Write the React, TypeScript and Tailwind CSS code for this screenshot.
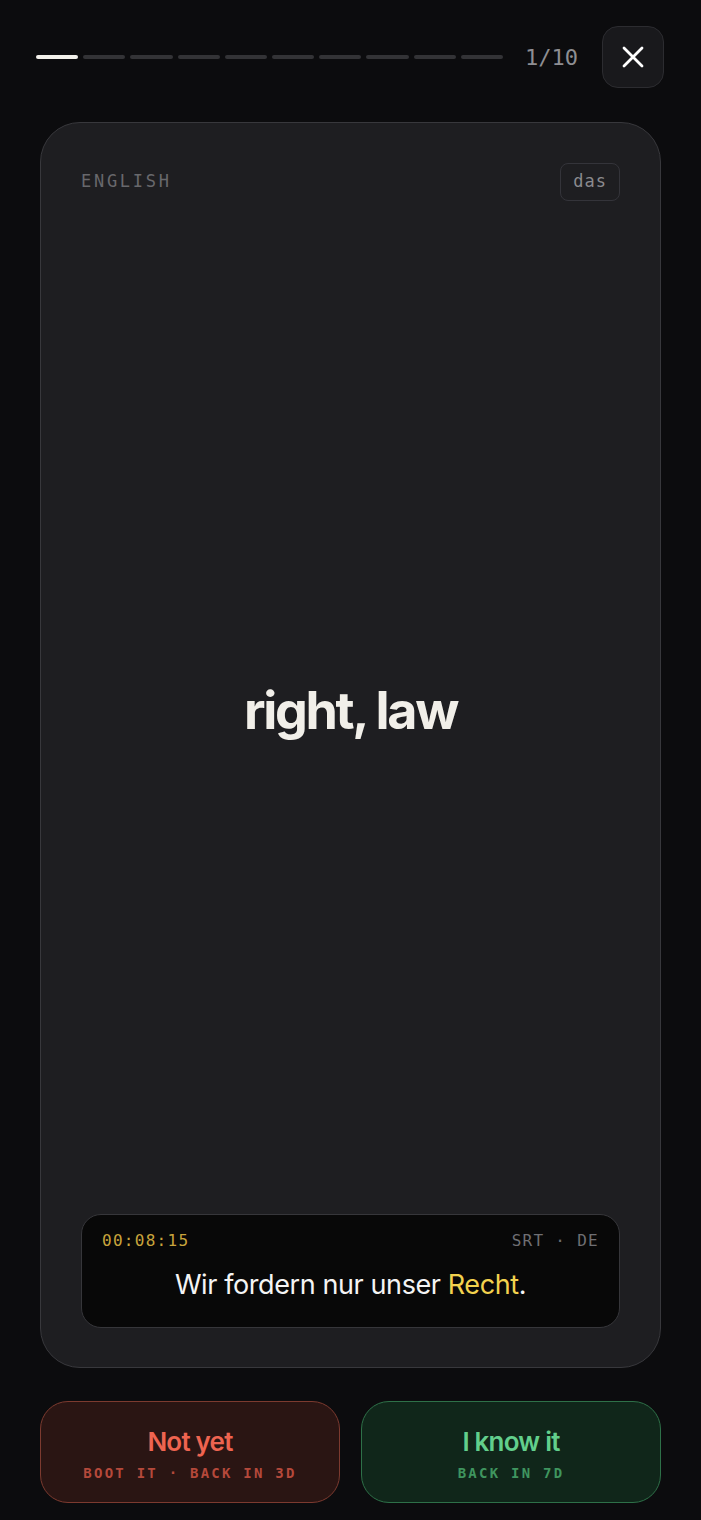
const MONO = "font-['DejaVu_Sans_Mono',monospace]";

function ProgressBar({ total, current }: { total: number; current: number }) {
  return (
    <div className="flex flex-1 items-center gap-[5px]">
      {Array.from({ length: total }).map((_, i) => (
        <div
          key={i}
          className={`h-[4px] flex-1 rounded-full ${i < current ? "bg-[#f2f0ea]" : "bg-[#333336]"}`}
        />
      ))}
    </div>
  );
}

export default function App() {
  return (
    <div className="min-h-[1520px] w-full bg-[#0c0c0e] font-['Inter',sans-serif] text-white">
      {/* Header */}
      <div className="flex items-center pl-[36px] pr-[37px] pt-[26px]">
        <ProgressBar total={10} current={1} />
        <span className={`${MONO} ml-[22px] text-[22px] text-[#8e8e92]`}>1/10</span>
        <button className="ml-[24px] flex h-[62px] w-[62px] items-center justify-center rounded-[16px] border border-[#2c2c30] bg-[#19191c]">
          <svg width="24" height="24" viewBox="0 0 24 24" fill="none" stroke="#ffffff" strokeWidth="2.8" strokeLinecap="round">
            <path d="M3 3 21 21M21 3 3 21" />
          </svg>
        </button>
      </div>

      {/* Card */}
      <div className="mx-[40px] mt-[34px] flex h-[1246px] flex-col rounded-[40px] border border-[#38383c] bg-[#1e1e21] px-[40px] pb-[39px] pt-[40px]">
        <div className="flex items-center justify-between">
          <span className={`${MONO} text-[17px] tracking-[0.16em] text-[#68686c]`}>ENGLISH</span>
          <span className={`${MONO} flex h-[38px] items-center rounded-[8px] border border-[#34343a] px-[12px] text-[17px] tracking-[0.06em] text-[#8a8a8e]`}>
            das
          </span>
        </div>

        <div className="flex flex-1 items-center justify-center pt-[8px]">
          <h1 className="text-[52px] font-bold tracking-[-0.045em] text-[#f1efe9]">right, law</h1>
        </div>

        <div className="rounded-[20px] border border-[#36363a] bg-[#080808] px-[20px] pb-[22px] pt-[14px]">
          <div className={`${MONO} flex items-center justify-between text-[16px] tracking-[0.08em]`}>
            <span className="text-[#c8a43c]">00:08:15</span>
            <span className="text-[#6f6f73]">SRT · DE</span>
          </div>
          <p className="mt-[12px] text-center text-[27px] tracking-[-0.015em] text-[#f4f4f4]">
            Wir fordern nur unser <span className="text-[#f3d24e]">Recht</span>.
          </p>
        </div>
      </div>

      {/* Actions */}
      <div className="mx-[40px] mt-[33px] grid grid-cols-2 gap-[21px]">
        <button className="flex h-[102px] flex-col items-center justify-center rounded-[28px] border-[1.5px] border-[#7c3a2f] bg-[#2a1513]">
          <span className="mt-[2px] text-[26px] font-semibold tracking-[-0.03em] text-[#ee6450]">Not yet</span>
          <span className={`${MONO} mt-[2px] text-[14px] font-bold tracking-[0.16em] text-[#b5493b]`}>BOOT IT · BACK IN 3D</span>
        </button>
        <button className="flex h-[102px] flex-col items-center justify-center rounded-[28px] border-[1.5px] border-[#2e7048] bg-[#10261a]">
          <span className="mt-[2px] text-[26px] font-semibold tracking-[-0.03em] text-[#62cf8c]">I know it</span>
          <span className={`${MONO} mt-[2px] text-[14px] font-bold tracking-[0.16em] text-[#3f955f]`}>BACK IN 7D</span>
        </button>
      </div>
    </div>
  );
}
